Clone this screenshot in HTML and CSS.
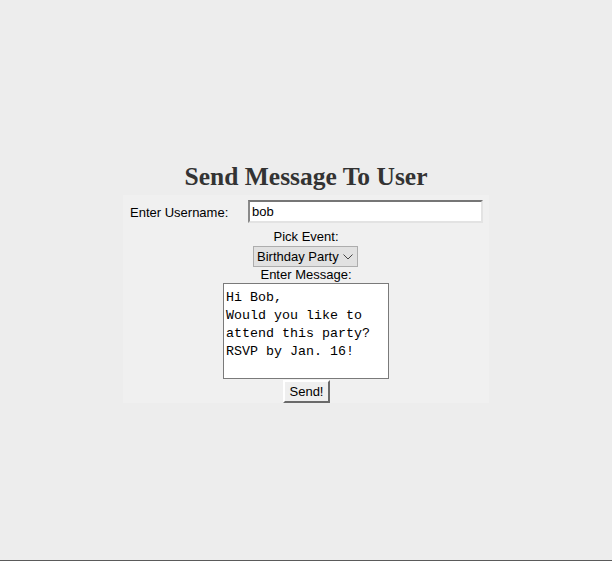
FILE: index.html
```html
<!DOCTYPE html>
<html>
<head>
<meta charset="utf-8">
<link rel="stylesheet" href="styles.css">
<title>Send Message</title>
</head>
<body>
<div class="page">
  <h1 class="title">Send Message To User</h1>
  <form class="panel">
    <div class="user-row">
      <label class="user-label" for="user">Enter Username:</label>
      <input class="user-input" id="user" type="text" value="bob">
    </div>
    <label class="label">Pick Event:</label>
    <div class="select-wrap">
      <select class="select"><option>Birthday Party</option></select>
      <svg class="chev" width="10" height="6" viewBox="0 0 10 6"><path d="M0.5 0.5 L5 5 L9.5 0.5" fill="none" stroke="#444" stroke-width="1"/></svg>
    </div>
    <label class="label">Enter Message:</label>
    <textarea class="message">Hi Bob,
Would you like to
attend this party?
RSVP by Jan. 16!</textarea>
    <button class="send" type="button">Send!</button>
  </form>
</div>
</body>
</html>
```
FILE: styles.css
```css
html, body {
  margin: 0;
  padding: 0;
  background: #ededed;
}
.page {
  box-sizing: border-box;
  height: 561px;
  border-bottom: 1px solid #5a5a5a;
  padding-top: 162px;
  display: flex;
  flex-direction: column;
  align-items: center;
  font-family: "Liberation Sans", Arial, sans-serif;
  font-size: 13px;
  color: #000;
}
.title {
  margin: 0 0 3px;
  font-family: "Liberation Serif", "Times New Roman", serif;
  font-size: 25.5px;
  font-weight: bold;
  color: #333;
  line-height: 30px;
}
.panel {
  width: 366px;
  background: #f0f0f0;
  display: flex;
  flex-direction: column;
  align-items: center;
  padding: 5px 0 0;
}
.user-row {
  align-self: stretch;
  display: flex;
  align-items: center;
  padding: 0 6px 0 7px;
}
.user-label {
  width: 118px;
  padding-top: 2px;
}
.user-input {
  box-sizing: border-box;
  width: 235px;
  height: 23px;
  margin: 0;
  padding: 0 2px;
  font-family: "Liberation Sans", Arial, sans-serif;
  font-size: 13px;
  color: #000;
  background: #fff;
  border-style: solid;
  border-width: 2px;
  border-color: #767676 #e3e3e3 #e3e3e3 #8a8a8a;
  outline: none;
}
.label {
  display: block;
  line-height: 16px;
}
.label:first-of-type {
  margin-top: 6px;
}
.select-wrap {
  position: relative;
  margin: 1px 0 0 -1px;
}
.select {
  appearance: none;
  -webkit-appearance: none;
  box-sizing: border-box;
  width: 105px;
  height: 21px;
  margin: 0;
  padding: 0 0 0 3px;
  font-family: "Liberation Sans", Arial, sans-serif;
  font-size: 13px;
  color: #000;
  background: #e1e1e1;
  border: 1px solid #adadad;
  border-radius: 0;
}
.chev {
  position: absolute;
  right: 5px;
  top: 8px;
  pointer-events: none;
}
.message {
  box-sizing: border-box;
  width: 166px;
  height: 96px;
  margin: 0;
  padding: 5px 2px;
  font-family: "Courier New", "Nimbus Mono PS", "FreeMono", "Liberation Mono", monospace;
  font-size: 13.33px;
  line-height: 18px;
  color: #000;
  background: #fff;
  border: 1px solid #7a7a7a;
  resize: none;
  overflow: hidden;
  display: block;
}
.send {
  box-sizing: border-box;
  width: 47px;
  height: 23px;
  margin: 1px 0 0 1px;
  padding: 0;
  font-family: "Liberation Sans", Arial, sans-serif;
  font-size: 13px;
  color: #000;
  background: #efefef;
  border-style: solid;
  border-width: 2px;
  border-color: #ffffff #6a6a6a #6a6a6a #ffffff;
  border-radius: 0;
}
```
